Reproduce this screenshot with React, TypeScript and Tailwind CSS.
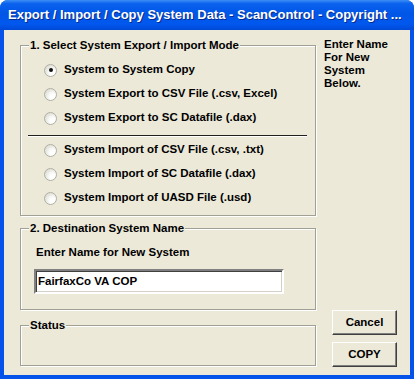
import { ReactNode } from 'react';

const font = "font-['Liberation_Sans',Arial,sans-serif]";

const GroupBox = ({ title, className, children }: { title: string; className: string; children?: ReactNode }) => {
  return (
    <fieldset
      className={`border border-[#a0a094] shadow-[inset_1px_1px_0_#fff,1px_1px_0_#fff] ${className}`}
    >
      <legend className="ml-[8px] px-[1px] bg-[#ece9d8] text-[11.5px] leading-[13px] font-bold text-black">
        {title}
      </legend>
      {children}
    </fieldset>
  );
};

const Radio = ({ label, checked }: { label: string; checked?: boolean }) => {
  return (
    <div className="h-[24px] flex items-center pl-[23px]">
      <span className="w-[13px] h-[13px] rounded-full border border-[#b0b0a4] bg-[radial-gradient(circle_at_70%_70%,#ffffff_25%,#d0d0c4_100%)] flex items-center justify-center">
        {checked && <span className="w-[4px] h-[4px] rounded-full bg-[#111]" />}
      </span>
      <span className="ml-[7px] text-[11.5px] font-bold text-black">{label}</span>
    </div>
  );
};

const Button = ({ label }: { label: string }) => {
  return (
    <button className="w-[65px] h-[25px] bg-[#ece9d8] border border-t-white border-l-white border-r-[#404040] border-b-[#404040] shadow-[inset_-1px_-1px_0_#808080] text-[11.5px] font-bold text-black">
      {label}
    </button>
  );
};

export default function App() {
  return (
    <div className={`w-[414px] h-[379px] flex flex-col bg-[#0553e8] rounded-t-[8px] overflow-hidden ${font}`}>
      <div className="h-[30px] shrink-0 flex items-center pl-[8px] bg-[linear-gradient(to_bottom,#3d8ff5_0%,#0a62ee_12%,#0056e6_45%,#0058ee_80%,#0049d6_100%)]">
        <span className="text-white font-bold text-[13px] whitespace-nowrap [text-shadow:1px_1px_0_#0a2a8a]">
          Export / Import / Copy System Data - ScanControl - Copyright ...
        </span>
      </div>
      <div className="flex-1 mx-[4px] mb-[4px] bg-[#ece9d8] flex">
        <div className="w-[313px] pl-[16px] pt-[9px] flex flex-col">
          <GroupBox title="1. Select System Export / Import Mode" className="h-[177px] w-[296px]">
            <div className="pt-[6px]">
              <Radio label="System to System Copy" checked />
              <Radio label="System Export to CSV File (.csv, Excel)" />
              <Radio label="System Export to SC Datafile (.dax)" />
              <div className="mt-[5px] mb-[2px] ml-[7px] w-[279px] h-px bg-[#202020] shadow-[0_1px_0_#fff]" />
              <Radio label="System Import of CSV File (.csv, .txt)" />
              <Radio label="System Import of SC Datafile (.dax)" />
              <Radio label="System Import of UASD File (.usd)" />
            </div>
          </GroupBox>
          <GroupBox title="2. Destination System Name" className="mt-[6px] h-[88px] w-[296px]">
            <div className="pl-[15px] pt-[11px] text-[11.5px] leading-[13px] font-bold text-black">
              Enter Name for New System
            </div>
            <div className="ml-[13px] mt-[10px] w-[250px] h-[25px] bg-white border-2 border-t-[#808080] border-l-[#808080] border-b-white border-r-white shadow-[inset_1px_1px_0_#404040,inset_-1px_-1px_0_#d4d0c8] flex items-center pl-[2px] text-[11.5px] font-bold text-black">
              FairfaxCo VA COP
            </div>
          </GroupBox>
          <GroupBox title="Status" className="mt-[9px] h-[47px] w-[296px]" />
        </div>
        <div className="flex-1 flex flex-col pl-[7px]">
          <div className="pt-[8px] text-[11.5px] leading-[13px] font-bold text-black">
            Enter Name
            <br />
            For New
            <br />
            System
            <br />
            Below.
          </div>
          <div className="mt-auto mb-[8px] pl-[8px] flex flex-col gap-[7px]">
            <Button label="Cancel" />
            <Button label="COPY" />
          </div>
        </div>
      </div>
    </div>
  );
}
